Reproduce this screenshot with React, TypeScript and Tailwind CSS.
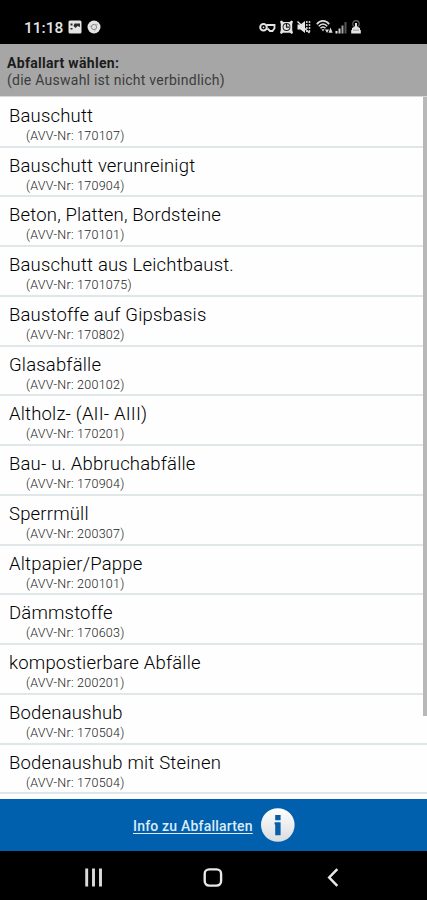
import React from "react";

const wasteTypes = [
  { name: "Bauschutt", avv: "170107" },
  { name: "Bauschutt verunreinigt", avv: "170904" },
  { name: "Beton, Platten, Bordsteine", avv: "170101" },
  { name: "Bauschutt aus Leichtbaust.", avv: "1701075" },
  { name: "Baustoffe auf Gipsbasis", avv: "170802" },
  { name: "Glasabfälle", avv: "200102" },
  { name: "Altholz- (AII- AIII)", avv: "170201" },
  { name: "Bau- u. Abbruchabfälle", avv: "170904" },
  { name: "Sperrmüll", avv: "200307" },
  { name: "Altpapier/Pappe", avv: "200101" },
  { name: "Dämmstoffe", avv: "170603" },
  { name: "kompostierbare Abfälle", avv: "200201" },
  { name: "Bodenaushub", avv: "170504" },
  { name: "Bodenaushub mit Steinen", avv: "170504" },
];

function StatusBar() {
  return (
    <div className="flex h-11 shrink-0 items-start bg-black pl-[24px] pr-[66px] pt-[20px] text-[#e4e4e4]">
      <span className="w-[39px] whitespace-nowrap text-[15.5px] font-medium leading-[16px]">
        11:18
      </span>
      <svg className="ml-[5px] h-[14px] w-[14px]" viewBox="0 0 14 14">
        <rect x="0.5" y="0.5" width="13" height="13" rx="1.5" fill="#e4e4e4" />
        <path d="M2.500 3.500h2v2h-2zM5.500 6l1-2.500h5.500v3.500l-2.500-1-2 2zM2.500 8h2v1.500h-2z" fill="#2a2a2a" />
      </svg>
      <svg className="ml-[5px] h-[14px] w-[14px]" viewBox="0 0 14 14">
        <circle cx="7" cy="7" r="6.5" fill="#e4e4e4" />
        <circle cx="7" cy="7" r="2.6" fill="none" stroke="#888" strokeWidth="1" />
        <path d="M7 4.400h4M9.200 8.500L7.500 11.500M4.800 8.500L3 5.500" stroke="#aaa" strokeWidth="0.8" />
      </svg>
      <div className="ml-auto flex">
        <svg className="h-[14px] w-[17px]" viewBox="0 0 17 14" fill="none" stroke="#e4e4e4">
          <circle cx="4.500" cy="7.300" r="3.300" strokeWidth="2" />
          <circle cx="4.500" cy="7.300" r="0.900" fill="#e4e4e4" stroke="none" />
          <path d="M7.500 5h8v3.300L13.500 11h-2.500L8.500 8.500" strokeWidth="1.800" />
        </svg>
        <svg className="ml-[4px] h-[14px] w-[13px]" viewBox="0 0 13 14">
          <path d="M0 1.500L1.500 .5 3.500 2h6l2-1.500L13 1.500 12.200 4v6l.8 3-1.500 1-1.500-1.200H3L1.500 14 0 13l.8-3V4z" fill="#e4e4e4" />
          <circle cx="6.500" cy="7" r="3.900" fill="#161616" />
          <circle cx="6.500" cy="7" r="3" fill="#e4e4e4" />
          <path d="M6.500 4v3.200H9" fill="none" stroke="#161616" strokeWidth="1.200" />
        </svg>
        <svg className="ml-[4px] h-[14px] w-[14px]" viewBox="0 0 14 14">
          <path d="M0.500 4.500h3L8 1v12L3.500 9.500h-3z" fill="#e4e4e4" />
          <path d="M0.500 1.500l12 11.500" stroke="#e4e4e4" strokeWidth="1.400" />
          <path d="M9.800 1v12M12.500 1v12" stroke="#d0d0d0" strokeWidth="1.500" strokeDasharray="2 1" />
        </svg>
        <svg className="ml-[5px] h-[14px] w-[17px]" viewBox="0 0 17 14" fill="none" stroke="#dcdcdc">
          <path d="M0.800 4.200C4-.2 10-.2 13.200 4.200" strokeWidth="1.600" />
          <path d="M2.800 6.200c2.500-3 6-3 8.400 0" strokeWidth="1.600" />
          <path d="M4.500 8.200c1.500-1.700 3.500-1.700 5 0" strokeWidth="1.600" />
          <path d="M5.500 9.300h3L7 11.500z" fill="#dcdcdc" stroke="none" />
          <path d="M9 9.500l2 3.500L13 9.500zM12.500 12.800L14.500 7.500l2.200 5.300z" fill="#dcdcdc" stroke="none" />
        </svg>
        <svg className="ml-[2px] h-[14px] w-[12px]" viewBox="0 0 12 14">
          <rect x="0.500" y="11" width="2" height="2.500" fill="#e4e4e4" />
          <rect x="3.500" y="8.500" width="2" height="5" fill="#d0d0d0" />
          <rect x="6.500" y="5.500" width="2" height="8" fill="#a0a0a0" />
          <rect x="9.500" y="2" width="2" height="11.500" fill="#555" />
        </svg>
        <svg className="ml-[4px] h-[14px] w-[10px]" viewBox="0 0 10 14">
          <circle cx="5" cy="3.800" r="3.200" fill="none" stroke="#666" strokeWidth="1.200" />
          <path d="M4 3h2v3.500l3 1.500v2h.8v3.500H.2V10h.8V8l3-1.500z" fill="#e4e4e4" />
          <path d="M2 10.200h6" stroke="#777" strokeWidth="0.700" />
        </svg>
      </div>
    </div>
  );
}

function InfoIcon() {
  return (
    <svg className="ml-[8px] h-[34px] w-[34px]" viewBox="0 0 34 34">
      <defs>
        <linearGradient id="disc" x1="0" y1="0" x2="0" y2="1">
          <stop offset="0" stopColor="#ffffff" />
          <stop offset="1" stopColor="#d9dce0" />
        </linearGradient>
      </defs>
      <circle cx="16.800" cy="17" r="16.800" fill="url(#disc)" />
      <path d="M14.200 7h5.400v5.200h-5.400zM13.600 14.300h6v13H14.200V16.500H13.600z" fill="#075fa8" />
    </svg>
  );
}

function NavBar() {
  return (
    <div className="flex h-[49px] shrink-0 items-start bg-black pl-[84px] pt-[17px]">
      <svg className="h-[19px] w-[20px]" viewBox="0 0 20 19">
        <path d="M2.700 0.500v18M9.500 0.500v18M16.500 0.500v18" stroke="#dcdcdc" strokeWidth="2.900" />
      </svg>
      <svg className="ml-[99px] h-[19px] w-[20px]" viewBox="0 0 20 19">
        <rect x="1.700" y="1.400" width="16.400" height="16.200" rx="4.500" fill="none" stroke="#e8e8e8" strokeWidth="2.400" />
      </svg>
      <svg className="ml-[104px] h-[19px] w-[12px]" viewBox="0 0 12 19">
        <path d="M10.300 1.200L2.200 9.500l8.100 8.300" fill="none" stroke="#e8e8e8" strokeWidth="2.500" />
      </svg>
    </div>
  );
}

export default function App() {
  return (
    <div className="flex h-[900px] w-[427px] flex-col overflow-hidden bg-white font-[Roboto,sans-serif]">
      <StatusBar />

      <div className="h-[52px] shrink-0 whitespace-nowrap bg-[#a6a6a6] pl-[7px] pt-[10px]">
        <h1 className="text-[14px] font-bold leading-[18px] tracking-[0.3px] text-[#1c1c1c]">
          Abfallart wählen:
        </h1>
        <p className="text-[14px] leading-[17px] tracking-[0.25px] text-[#3c3c3c]">
          (die Auswahl ist nicht verbindlich)
        </p>
      </div>

      <div className="relative h-[703px] shrink-0 overflow-hidden border-t border-[#d8d8d8] bg-[#fefefe] pt-[0.8px]">
        <ul>
          {wasteTypes.map((item) => (
            <li
              key={item.name}
              className="h-[49.75px] whitespace-nowrap border-b-2 border-[#dfe7e8] pl-[9px] pt-[6px]"
            >
              <div className="text-[18.5px] font-light leading-[24px] tracking-[0.18px] text-black">
                {item.name}
              </div>
              <div className="pl-[17px] text-[12.5px] font-light leading-[15.5px] tracking-[0.25px] text-[#222]">
                (AVV-Nr: {item.avv})
              </div>
            </li>
          ))}
        </ul>
        {/* scroll thumb */}
        <div className="absolute right-0 top-0 h-[619px] w-[4px] bg-[#b8b8b8]" />
      </div>

      <div className="flex h-[52px] shrink-0 items-center bg-[#0060ad] pl-[133px]">
        <a
          href="#"
          className="w-[120px] whitespace-nowrap pt-px text-[14px] font-medium leading-[18px] tracking-[0.2px] text-[#dcebf7] underline underline-offset-2"
        >
          Info zu Abfallarten
        </a>
        <InfoIcon />
      </div>

      <NavBar />
    </div>
  );
}
